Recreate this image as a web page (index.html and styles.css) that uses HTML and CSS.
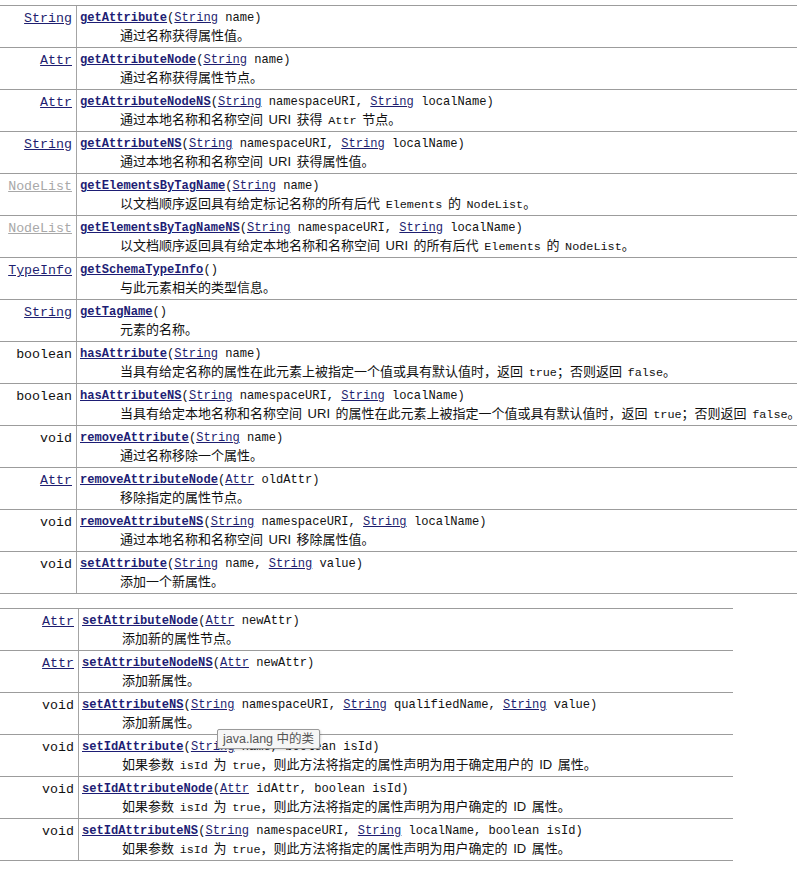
FILE: index.html
```html
<!DOCTYPE html>
<html>
<head>
<meta charset="utf-8">
<link rel="stylesheet" href="styles.css">
</head>
<body>
<div class="page">
<div class="summary first">
  <div class="row"><div class="type"><a class="lnk">String</a></div><div class="cell"><div class="sig"><a class="mname">getAttribute</a>(<a class="lnk">String</a> name)</div><div class="text">通过名称获得属性值。</div></div></div>
  <div class="row"><div class="type"><a class="lnk">Attr</a></div><div class="cell"><div class="sig"><a class="mname">getAttributeNode</a>(<a class="lnk">String</a> name)</div><div class="text">通过名称获得属性节点。</div></div></div>
  <div class="row"><div class="type"><a class="lnk">Attr</a></div><div class="cell"><div class="sig"><a class="mname">getAttributeNodeNS</a>(<a class="lnk">String</a> namespaceURI, <a class="lnk">String</a> localName)</div><div class="text">通过本地名称和名称空间 URI 获得 <code>Attr</code> 节点。</div></div></div>
  <div class="row"><div class="type"><a class="lnk">String</a></div><div class="cell"><div class="sig"><a class="mname">getAttributeNS</a>(<a class="lnk">String</a> namespaceURI, <a class="lnk">String</a> localName)</div><div class="text">通过本地名称和名称空间 URI 获得属性值。</div></div></div>
  <div class="row"><div class="type"><a class="lnk dim">NodeList</a></div><div class="cell"><div class="sig"><a class="mname">getElementsByTagName</a>(<a class="lnk">String</a> name)</div><div class="text">以文档顺序返回具有给定标记名称的所有后代 <code>Elements</code> 的 <code>NodeList</code>。</div></div></div>
  <div class="row"><div class="type"><a class="lnk dim">NodeList</a></div><div class="cell"><div class="sig"><a class="mname">getElementsByTagNameNS</a>(<a class="lnk">String</a> namespaceURI, <a class="lnk">String</a> localName)</div><div class="text">以文档顺序返回具有给定本地名称和名称空间 URI 的所有后代 <code>Elements</code> 的 <code>NodeList</code>。</div></div></div>
  <div class="row"><div class="type"><a class="lnk">TypeInfo</a></div><div class="cell"><div class="sig"><a class="mname">getSchemaTypeInfo</a>()</div><div class="text">与此元素相关的类型信息。</div></div></div>
  <div class="row"><div class="type"><a class="lnk">String</a></div><div class="cell"><div class="sig"><a class="mname">getTagName</a>()</div><div class="text">元素的名称。</div></div></div>
  <div class="row"><div class="type">boolean</div><div class="cell"><div class="sig"><a class="mname">hasAttribute</a>(<a class="lnk">String</a> name)</div><div class="text">当具有给定名称的属性在此元素上被指定一个值或具有默认值时，返回 <code>true</code>；否则返回 <code>false</code>。</div></div></div>
  <div class="row"><div class="type">boolean</div><div class="cell"><div class="sig"><a class="mname">hasAttributeNS</a>(<a class="lnk">String</a> namespaceURI, <a class="lnk">String</a> localName)</div><div class="text">当具有给定本地名称和名称空间 URI 的属性在此元素上被指定一个值或具有默认值时，返回 <code>true</code>；否则返回 <code>false</code>。</div></div></div>
  <div class="row"><div class="type">void</div><div class="cell"><div class="sig"><a class="mname">removeAttribute</a>(<a class="lnk">String</a> name)</div><div class="text">通过名称移除一个属性。</div></div></div>
  <div class="row"><div class="type"><a class="lnk">Attr</a></div><div class="cell"><div class="sig"><a class="mname">removeAttributeNode</a>(<a class="lnk">Attr</a> oldAttr)</div><div class="text">移除指定的属性节点。</div></div></div>
  <div class="row"><div class="type">void</div><div class="cell"><div class="sig"><a class="mname">removeAttributeNS</a>(<a class="lnk">String</a> namespaceURI, <a class="lnk">String</a> localName)</div><div class="text">通过本地名称和名称空间 URI 移除属性值。</div></div></div>
  <div class="row"><div class="type">void</div><div class="cell"><div class="sig"><a class="mname">setAttribute</a>(<a class="lnk">String</a> name, <a class="lnk">String</a> value)</div><div class="text">添加一个新属性。</div></div></div>
</div>

<div class="summary second">
  <div class="row"><div class="type"><a class="lnk">Attr</a></div><div class="cell"><div class="sig"><a class="mname">setAttributeNode</a>(<a class="lnk">Attr</a> newAttr)</div><div class="text">添加新的属性节点。</div></div></div>
  <div class="row"><div class="type"><a class="lnk">Attr</a></div><div class="cell"><div class="sig"><a class="mname">setAttributeNodeNS</a>(<a class="lnk">Attr</a> newAttr)</div><div class="text">添加新属性。</div></div></div>
  <div class="row"><div class="type">void</div><div class="cell"><div class="sig"><a class="mname">setAttributeNS</a>(<a class="lnk">String</a> namespaceURI, <a class="lnk">String</a> qualifiedName, <a class="lnk">String</a> value)</div><div class="text">添加新属性。</div></div></div>
  <div class="row"><div class="type">void</div><div class="cell"><div class="sig"><a class="mname">setIdAttribute</a>(<a class="lnk">String</a> name, boolean isId)</div><div class="text">如果参数 <code>isId</code> 为 <code>true</code>，则此方法将指定的属性声明为用于确定用户的 ID 属性。</div></div></div>
  <div class="row"><div class="type">void</div><div class="cell"><div class="sig"><a class="mname">setIdAttributeNode</a>(<a class="lnk">Attr</a> idAttr, boolean isId)</div><div class="text">如果参数 <code>isId</code> 为 <code>true</code>，则此方法将指定的属性声明为用户确定的 ID 属性。</div></div></div>
  <div class="row"><div class="type">void</div><div class="cell"><div class="sig"><a class="mname">setIdAttributeNS</a>(<a class="lnk">String</a> namespaceURI, <a class="lnk">String</a> localName, boolean isId)</div><div class="text">如果参数 <code>isId</code> 为 <code>true</code>，则此方法将指定的属性声明为用户确定的 ID 属性。</div></div></div>
</div>

<div class="tooltip">java.lang 中的类</div>
</div>
</body>
</html>
```

FILE: styles.css
```css
html, body {
  margin: 0;
  padding: 0;
  background: #ffffff;
  overflow: hidden;
}
.page {
  position: relative;
  padding-top: 5px;
  font-family: "Liberation Mono", "Noto Sans CJK SC", monospace;
  font-size: 12.1px;
  color: #111;
  white-space: nowrap;
}
.summary {
  border-bottom: 1px solid #9c9c9c;
}
.first {
  width: max-content;
  min-width: 100%;
}
.second {
  width: 733px;
  margin-top: 14px;
}
.row {
  display: flex;
  height: 42px;
  box-sizing: border-box;
  border-top: 1px solid #9c9c9c;
}
.type {
  box-sizing: border-box;
  width: 77px;
  flex: none;
  border-right: 1px solid #a4a4a4;
  text-align: right;
  padding: 4px 4px 0 0;
  line-height: 17px;
  font-size: 13.3px;
}
.second .type {
  width: 79px;
}
.cell {
  padding: 4px 4px 0 3px;
  line-height: 17px;
}
.lnk {
  color: #1f1f70;
  text-decoration: underline;
}
.lnk.dim {
  color: #a8a8a8;
}
.mname {
  color: #1d1d74;
  font-weight: bold;
  text-decoration: underline;
}
.text {
  padding-left: 40px;
  font-family: "Liberation Sans", "Noto Sans CJK SC", sans-serif;
  font-size: 13px;
  word-spacing: 2px;
  color: #111;
}
.text code {
  font-family: "Liberation Mono", monospace;
  font-size: 11.8px;
  word-spacing: 0;
}
.tooltip {
  position: absolute;
  left: 217px;
  top: 729px;
  height: 18px;
  line-height: 18px;
  padding: 0 5px;
  background: #f6f6f6;
  border: 1px solid #9a9a9a;
  border-radius: 2px;
  box-shadow: 1px 1px 2px rgba(0,0,0,0.15);
  font-family: "Liberation Sans", "Noto Sans CJK SC", sans-serif;
  font-size: 12.5px;
  color: #555;
}
```
